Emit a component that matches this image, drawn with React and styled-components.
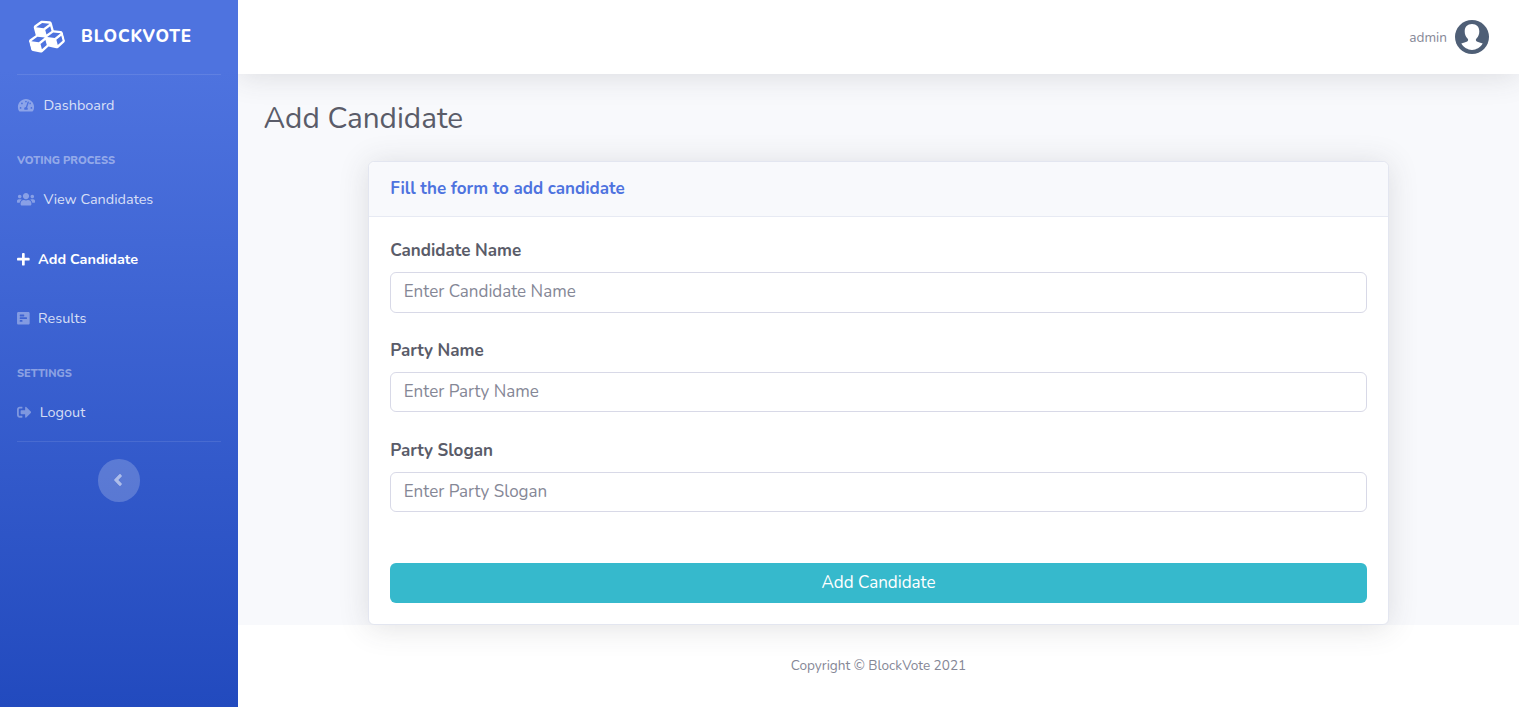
import React from 'react';
import styled, { createGlobalStyle } from 'styled-components';
import {
  FaAngleLeft,
  FaCubes,
  FaPlus,
  FaPollH,
  FaSignOutAlt,
  FaTachometerAlt,
  FaUsers,
} from 'react-icons/fa';

const GlobalStyle = createGlobalStyle`
  *, *::before, *::after { box-sizing: border-box; }
  html { font-size: 17px; }
  body {
    margin: 0;
    background: #fff;
    color: #858796;
    font-family: Nunito, Lato, "Liberation Sans", sans-serif;
    font-size: 1rem;
    line-height: 1.5;
  }
`;

const Page = styled.div`
  display: flex;
  height: 707px;
  overflow: hidden;
`;

const Sidebar = styled.nav`
  position: relative;
  z-index: 1;
  display: flex;
  flex-direction: column;
  flex: 0 0 14rem;
  background: #4e73df linear-gradient(180deg, #4e73df 10%, #224abe 100%);
`;

const Brand = styled.a`
  display: flex;
  align-items: center;
  height: 74px;
  padding: 0 28px 2px;
  color: #fff;
  font-weight: 800;
  letter-spacing: 0.05rem;

  svg {
    width: 35px;
    height: 35px;
    margin-bottom: 2px;
    transform: rotate(-15deg);
  }
`;

const BrandName = styled.span`
  margin: 2px 0 0 18px;
`;

const Divider = styled.hr`
  width: 204px;
  height: 1px;
  margin: 0 17px;
  border: 0;
  background: rgba(255, 255, 255, 0.1);
`;

const NavHeading = styled.div`
  margin-top: 17px;
  padding: 0 17px;
  color: rgba(255, 255, 255, 0.43);
  font-size: 0.65rem;
  font-weight: 800;
  line-height: 17px;
`;

const NavLink = styled.a`
  display: flex;
  align-items: center;
  height: 59.7px;
  padding: 0 17px;
  color: ${(p) => (p.$active ? '#fff' : 'rgba(255, 255, 255, 0.8)')};
  font-size: 0.85rem;
  font-weight: ${(p) => (p.$active ? 700 : 400)};
  gap: 8.4px;

  svg {
    flex: none;
    width: ${(p) => p.$icon}px;
    height: 14.45px;
    margin-top: 1px;
    color: ${(p) => (p.$active ? '#fff' : 'rgba(255, 255, 255, 0.36)')};
  }
`;

const NavText = styled.span`
  padding-top: 2.4px;
`;

const Collapse = styled.button`
  display: flex;
  align-items: center;
  justify-content: center;
  align-self: center;
  width: 42.5px;
  height: 42.5px;
  margin-top: 17px;
  padding: 0 2px 1px 0;
  border: 0;
  border-radius: 50%;
  background: rgba(255, 255, 255, 0.2);
  color: rgba(255, 255, 255, 0.5);
  font-size: 18px;

  svg {
    stroke: currentColor;
    stroke-width: 12px;
  }
`;

const Content = styled.div`
  display: flex;
  flex: 1;
  flex-direction: column;
  min-width: 0;
`;

const Main = styled.main`
  height: 625px;
  background: #f8f9fc;
`;

const Topbar = styled.header`
  display: flex;
  align-items: center;
  justify-content: flex-end;
  height: 74px;
  padding-right: 30px;
  background: #fff;
  box-shadow: 0 0.15rem 1.75rem 0 rgba(58, 59, 69, 0.15);
  font-size: 0.8rem;
  gap: 8px;
`;

const UserName = styled.span`
  padding-top: 2.4px;
`;

const Avatar = styled.svg`
  width: 34px;
  height: 34px;
`;

const Title = styled.h1`
  margin: 0;
  padding: 27px 25.5px 24px;
  color: #5a5c69;
  font-size: 1.75rem;
  font-weight: 400;
  line-height: 36px;
`;

const Card = styled.section`
  position: relative;
  width: 1020.6px;
  height: 464px;
  margin: 0 auto;
  border: 1px solid #e3e6f0;
  border-radius: 0.35rem;
  background: #fff;
  box-shadow: 0 0.15rem 1.75rem 0 rgba(58, 59, 69, 0.15);
`;

const CardHeader = styled.h6`
  margin: 0;
  height: 55px;
  padding: 0 21px;
  border-bottom: 1px solid #e7eaf3;
  border-radius: 0.35rem 0.35rem 0 0;
  background: #f8f9fc;
  color: #4e73df;
  font-size: 1rem;
  font-weight: 700;
  line-height: 53px;
`;

const Form = styled.form`
  display: flex;
  flex-direction: column;
  padding: 21px 21px 0;
`;

const Field = styled.div`
  display: flex;
  flex-direction: column;
  height: 99.8px;
`;

const Label = styled.label`
  height: 34px;
  color: #5a5c69;
  font-weight: 700;
  line-height: 25.5px;
`;

const Input = styled.input`
  height: 40.6px;
  padding: 0 12.5px 0.8px;
  border: 1px solid #d8d9e7;
  border-radius: 0.35rem;
  background: #fff;
  font: inherit;

  &::placeholder {
    color: #858796;
    opacity: 1;
  }
`;

const Submit = styled.button`
  height: 40px;
  margin-top: 25.6px;
  padding: 0 0 1px;
  border: 0;
  border-radius: 0.35rem;
  background: #36b9cc;
  color: #fff;
  font: inherit;
`;

const Footer = styled.footer`
  padding-top: 31px;
  font-size: 0.8rem;
  line-height: 20px;
  text-align: center;
`;

const fields = [
  { id: 'name', label: 'Candidate Name', hint: 'Enter Candidate Name' },
  { id: 'party', label: 'Party Name', hint: 'Enter Party Name' },
  { id: 'slogan', label: 'Party Slogan', hint: 'Enter Party Slogan' },
];

export default function App() {
  return (
    <>
      <GlobalStyle />
      <Page>
        <Sidebar>
          <Brand>
            <FaCubes />
            <BrandName>BLOCKVOTE</BrandName>
          </Brand>
          <Divider />
          <NavLink $icon={18}>
            <FaTachometerAlt />
            <NavText>Dashboard</NavText>
          </NavLink>
          <NavHeading>VOTING PROCESS</NavHeading>
          <NavLink $icon={18}>
            <FaUsers />
            <NavText>View Candidates</NavText>
          </NavLink>
          <NavLink $icon={12.7} $active>
            <FaPlus />
            <NavText>Add Candidate</NavText>
          </NavLink>
          <NavLink $icon={12.7}>
            <FaPollH />
            <NavText>Results</NavText>
          </NavLink>
          <NavHeading>SETTINGS</NavHeading>
          <NavLink $icon={14.45}>
            <FaSignOutAlt />
            <NavText>Logout</NavText>
          </NavLink>
          <Divider />
          <Collapse type="button" aria-label="Collapse sidebar">
            <FaAngleLeft />
          </Collapse>
        </Sidebar>
        <Content>
          <Main>
            <Topbar>
              <UserName>admin</UserName>
              <Avatar viewBox="0 0 34 34">
                <circle cx="17" cy="17" r="17" fill="#4f5f76" />
                <path
                  fill="#fff"
                  d="M17 4C12.4 4 9.7 7 9.7 11.2c0 3 .9 5.4 2.8 7.3.9.9.9 2.3-.3 3-1.5.8-3.8 1-5.9 2.1C8.8 27.6 12.6 29.9 17 29.9s8.2-2.3 10.7-6.3c-2.1-1.1-4.4-1.3-5.9-2.1-1.2-.7-1.2-2.1-.3-3 1.9-1.9 2.8-4.3 2.8-7.3C24.3 7 21.6 4 17 4z"
                />
              </Avatar>
            </Topbar>
            <Title>Add Candidate</Title>
            <Card>
              <CardHeader>Fill the form to add candidate</CardHeader>
              <Form>
                {fields.map((f) => (
                  <Field key={f.id}>
                    <Label htmlFor={f.id}>{f.label}</Label>
                    <Input id={f.id} placeholder={f.hint} />
                  </Field>
                ))}
                <Submit type="button">Add Candidate</Submit>
              </Form>
            </Card>
          </Main>
          <Footer>Copyright © BlockVote 2021</Footer>
        </Content>
      </Page>
    </>
  );
}
